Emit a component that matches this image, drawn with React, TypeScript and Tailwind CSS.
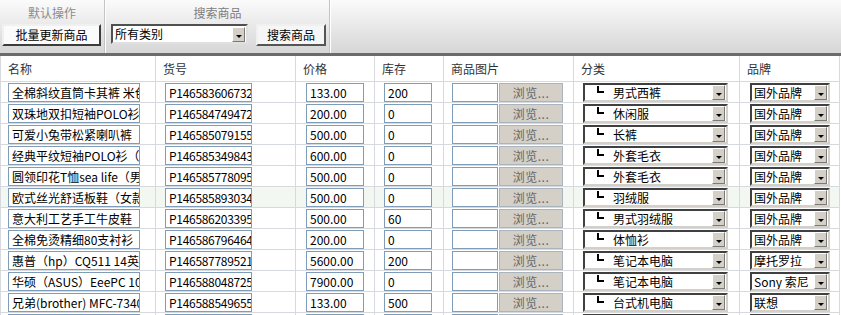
import React from "react";

type Row = {
  name: string;
  sku: string;
  price: string;
  stock: string;
  cat: string;
  brand: string;
  hl?: boolean;
};

const rows: Row[] = [
  { name: "全棉斜纹直筒卡其裤 米色", sku: "P1465836067323", price: "133.00", stock: "200", cat: "男式西裤", brand: "国外品牌" },
  { name: "双珠地双扣短袖POLO衫", sku: "P1465847494728", price: "200.00", stock: "0", cat: "休闲服", brand: "国外品牌" },
  { name: "可爱小兔带松紧喇叭裤", sku: "P1465850791552", price: "500.00", stock: "0", cat: "长裤", brand: "国外品牌" },
  { name: "经典平纹短袖POLO衫（女款）", sku: "P1465853498437", price: "600.00", stock: "0", cat: "外套毛衣", brand: "国外品牌" },
  { name: "圆领印花T恤sea life（男款）", sku: "P1465857780950", price: "500.00", stock: "0", cat: "外套毛衣", brand: "国外品牌" },
  { name: "欧式丝光舒适板鞋（女款）", sku: "P1465858930348", price: "500.00", stock: "0", cat: "羽绒服", brand: "国外品牌", hl: true },
  { name: "意大利工艺手工牛皮鞋", sku: "P1465862033951", price: "500.00", stock: "60", cat: "男式羽绒服", brand: "国外品牌" },
  { name: "全棉免烫精细80支衬衫", sku: "P1465867964648", price: "200.00", stock: "0", cat: "体恤衫", brand: "国外品牌" },
  { name: "惠普（hp）CQ511 14英寸笔记本", sku: "P1465877895219", price: "5600.00", stock: "200", cat: "笔记本电脑", brand: "摩托罗拉" },
  { name: "华硕（ASUS）EeePC 1005HA", sku: "P1465880487256", price: "7900.00", stock: "0", cat: "笔记本电脑", brand: "Sony 索尼" },
  { name: "兄弟(brother) MFC-7340 激光一体机", sku: "P1465885496555", price: "133.00", stock: "500", cat: "台式机电脑", brand: "联想" },
  { name: "联想 ThinkPad 笔记本", sku: "P1465889912345", price: "4800.00", stock: "0", cat: "笔记本电脑", brand: "联想" },
];

function Arrow() {
  return (
    <div className="mr-[1px] flex h-[15px] w-[13px] shrink-0 items-end justify-center self-center border border-t-white border-l-white border-b-[#7a7a7a] border-r-[#7a7a7a] bg-[#d4d0c8] pb-[3px]">
      <div className="h-0 w-0 border-l-[3px] border-r-[3px] border-t-[3px] border-l-transparent border-r-transparent border-t-black" />
    </div>
  );
}

function Box({ className, children }: { className: string; children: React.ReactNode }) {
  return (
    <div
      className={`h-[19px] overflow-hidden whitespace-nowrap border border-[#7f9db9] bg-white pl-[3px] text-[12px] leading-[17px] text-black ${className}`}
    >
      {children}
    </div>
  );
}

const cell = "flex items-center border-l border-[#d6dadf]";

export default function App() {
  return (
    <div className="h-[315px] w-[841px] overflow-hidden bg-white font-['Noto_Sans_CJK_SC','Noto_Sans',sans-serif]">
      {/* toolbar */}
      <div className="flex h-[56px] border-b-[3px] border-[#6b6b6b] bg-gradient-to-b from-[#fbfbfb] to-[#d6d6d6]">
        <div className="flex w-[105px] flex-col border-r border-[#c4c4c4]">
          <div className="h-[24px] text-center text-[12px] leading-[25px] text-[#8c8c8c]">默认操作</div>
          <button className="ml-[2px] h-[22px] w-[99px] border-2 border-t-[#f0f0f0] border-l-[#f0f0f0] border-b-[#3c3c3c] border-r-[#3c3c3c] bg-[#fbfbfb] text-[12px] leading-[18px] text-black">
            批量更新商品
          </button>
        </div>
        <div className="flex w-[225px] flex-col border-l border-r border-l-white border-r-[#c4c4c4]">
          <div className="h-[24px] text-center text-[12px] leading-[25px] text-[#7c7c7c]">搜索商品</div>
          <div className="flex items-start pl-[5px]">
            <div className="flex h-[20px] w-[137px] border-2 border-t-[#505050] border-l-[#505050] border-b-[#e0e0e0] border-r-[#e0e0e0] bg-white">
              <div className="flex-1 pl-[2px] text-[12px] leading-[16px] text-black">所有类别</div>
              <Arrow />
            </div>
            <button className="ml-[8px] h-[22px] w-[70px] border-2 border-t-[#f0f0f0] border-l-[#f0f0f0] border-b-[#555] border-r-[#555] bg-[#f6f6f6] text-[12px] leading-[18px] text-black">
              搜索商品
            </button>
          </div>
        </div>
        <div className="w-[1px] bg-white" />
      </div>

      {/* table */}
      <div className="grid w-[840px] grid-cols-[155px_140px_79px_69px_130px_166px_101px]">
        {["名称", "货号", "价格", "库存", "商品图片", "分类", "品牌"].map((h, i) => (
          <div
            key={h}
            className={`flex h-[26px] items-center border-b border-l border-[#d6dadf] pl-[7px] text-[12px] text-[#333] ${i === 6 ? "border-r" : ""}`}
          >
            {h}
          </div>
        ))}
        {rows.map((r, idx) => {
          const bg = r.hl ? "bg-[#f2f8f1]" : "bg-white";
          const base = `${cell} h-[21px] border-b ${bg}`;
          return (
            <React.Fragment key={idx}>
              <div className={`${base} pl-[7px]`}>
                <Box className="w-[132px]">{r.name}</Box>
              </div>
              <div className={`${base} pl-[9px]`}>
                <Box className="w-[87px] tracking-[-0.3px]">{r.sku}</Box>
              </div>
              <div className={`${base} pl-[10px]`}>
                <Box className="w-[58px]">{r.price}</Box>
              </div>
              <div className={`${base} pl-[9px]`}>
                <Box className="w-[48px]">{r.stock}</Box>
              </div>
              <div className={`${base} pl-[8px]`}>
                <Box className="w-[46px]">{""}</Box>
                <div className="ml-[1px] h-[19px] w-[64px] border border-[#aab4bf] bg-[#d4d0c8] text-center text-[12px] leading-[17px] tracking-[0.5px] text-[#666]">
                  浏览...
                </div>
              </div>
              <div className={`${base} pl-[9px]`}>
                <div className="flex h-[19px] w-[145px] border-2 border-t-[#404040] border-l-[#404040] border-b-[#d4d0c8] border-r-[#d4d0c8] bg-white">
                  <div className="ml-[12px] mt-[1px] h-[7px] w-[7px] shrink-0 border-b-2 border-l-2 border-black" />
                  <div className="flex-1 overflow-hidden whitespace-nowrap pl-[9px] text-[12px] leading-[15px] text-black">{r.cat}</div>
                  <Arrow />
                </div>
              </div>
              <div className={`${base} border-r pl-[10px]`}>
                <div className="flex h-[19px] w-[80px] border-2 border-t-[#404040] border-l-[#404040] border-b-[#d4d0c8] border-r-[#d4d0c8] bg-white">
                  <div className="flex-1 overflow-hidden whitespace-nowrap pl-[2px] text-[12px] leading-[15px] text-black">{r.brand}</div>
                  <Arrow />
                </div>
              </div>
            </React.Fragment>
          );
        })}
      </div>
    </div>
  );
}
